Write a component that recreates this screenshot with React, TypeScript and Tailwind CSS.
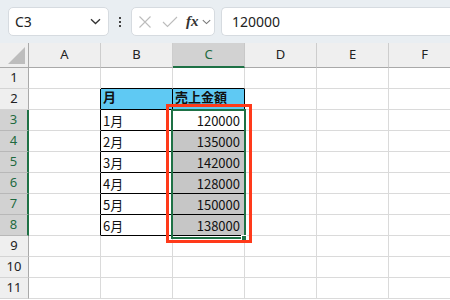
import React from "react";

const COLS = ["A", "B", "C", "D", "E", "F"];
const ROWS = [1, 2, 3, 4, 5, 6, 7, 8, 9, 10, 11];

const DATA: Record<number, [string, string]> = {
  2: ["月", "売上金額"],
  3: ["1月", "120000"],
  4: ["2月", "135000"],
  5: ["3月", "142000"],
  6: ["4月", "128000"],
  7: ["5月", "150000"],
  8: ["6月", "138000"],
};

const cellFont = { fontFamily: '"Noto Sans CJK JP", "Noto Sans", sans-serif' };
const uiFont = { fontFamily: '"Noto Sans", "Open Sans", sans-serif' };

function Chevron({ className }: { className?: string }) {
  return (
    <svg width="11" height="7" viewBox="0 0 11 7" className={className}>
      <path d="M1 1.2 L5.5 5.5 L10 1.2" fill="none" stroke="currentColor" strokeWidth="1.3" />
    </svg>
  );
}

function Toolbar() {
  return (
    <div className="flex h-[43px] items-start bg-[#e9eef2] pt-[7px]" style={uiFont}>
      <div className="ml-[8px] flex h-[29px] w-[101px] items-center justify-between rounded-[5px] border border-[#d6dbe0] bg-white pl-[6px] pr-[7px] text-[14px] text-[#222]">
        <span>C3</span>
        <Chevron className="text-[#333]" />
      </div>
      <div className="flex h-[29px] w-[22px] items-center justify-center">
        <div className="flex flex-col gap-[2px]">
          <span className="h-[2px] w-[2px] bg-[#444]" />
          <span className="h-[2px] w-[2px] bg-[#444]" />
          <span className="h-[2px] w-[2px] bg-[#444]" />
        </div>
      </div>
      <div className="flex h-[29px] w-[84px] items-center rounded-[5px] border border-[#d6dbe0] bg-white pl-[6px]">
        <svg width="14" height="14" viewBox="0 0 14 14" className="text-[#bcbcbc]">
          <path d="M1.5 1.5 L12.5 12.5 M12.5 1.5 L1.5 12.5" stroke="currentColor" strokeWidth="1.1" />
        </svg>
        <svg width="16" height="14" viewBox="0 0 16 14" className="ml-[10px] text-[#bcbcbc]">
          <path d="M1 7 L5.5 11.5 L15 2" fill="none" stroke="currentColor" strokeWidth="1.1" />
        </svg>
        <span
          className="ml-[8px] text-[15px] italic leading-none text-[#333]"
          style={{ fontFamily: '"Liberation Serif", serif', fontWeight: 700 }}
        >
          fx
        </span>
        <Chevron className="ml-[3px] h-[6px] w-[9px] text-[#777]" />
      </div>
      <div className="ml-[6px] flex h-[29px] flex-1 items-center rounded-l-[5px] border border-r-0 border-[#d6dbe0] bg-white pl-[10px] text-[14px] text-[#222]">
        120000
      </div>
    </div>
  );
}

function HeaderRow() {
  return (
    <div className="flex h-[25px]" style={uiFont}>
      <div className="relative w-[29px] shrink-0 border-r border-b border-[#a9a9a9] bg-[#efefef]">
        <svg width="17" height="17" viewBox="0 0 17 17" className="absolute bottom-[3px] right-[3px]">
          <path d="M17 0 L17 17 L0 17 Z" fill="#bdbdbd" />
        </svg>
      </div>
      {COLS.map((c) =>
        c === "C" ? (
          <div
            key={c}
            className="flex w-[72px] shrink-0 items-center justify-center border-r border-b-2 border-r-[#c8c8c8] border-b-[#1e7145] bg-[#d2d2d2] text-[13px] text-[#1e6a40]"
          >
            {c}
          </div>
        ) : (
          <div
            key={c}
            className="flex w-[72px] shrink-0 items-center justify-center border-r border-b border-r-[#cdcdcd] border-b-[#a9a9a9] bg-[#efefef] text-[13px] text-[#222]"
          >
            {c}
          </div>
        ),
      )}
    </div>
  );
}

function Row({ n }: { n: number }) {
  const selected = n >= 3 && n <= 8;
  const inTable = n >= 2 && n <= 8;
  const data = DATA[n];
  return (
    <div className="flex h-[21px]">
      <div
        className={
          selected
            ? "flex w-[29px] shrink-0 items-center justify-center border-r-2 border-b border-r-[#1e7145] border-b-[#b8b8b8] bg-[#d2d2d2] text-[13px] text-[#1e6a40]"
            : "flex w-[29px] shrink-0 items-center justify-center border-r border-b border-r-[#a9a9a9] border-b-[#d4d4d4] bg-[#efefef] text-[13px] text-[#222]"
        }
        style={uiFont}
      >
        {n}
      </div>
      {COLS.map((c) => {
        let cls = "flex w-[72px] shrink-0 items-end text-[13px] leading-[17px] text-[#111] border-r border-b";
        let content: React.ReactNode = null;
        if (c === "A") {
          cls += inTable ? " border-r-black border-b-[#dadada]" : " border-[#dadada]";
        } else if (c === "B") {
          if (inTable) {
            cls += " border-black pl-[2px]";
            content = data[0];
            cls += n === 2 ? " bg-[#5fc9f3] font-bold pb-[4px]" : " pb-[1px]";
          } else if (n === 1) {
            cls += " border-r-[#dadada] border-b-black";
          } else {
            cls += " border-[#dadada]";
          }
        } else if (c === "C") {
          if (inTable) {
            cls += " border-black";
            if (n === 2) {
              cls += " bg-[#5fc9f3] font-bold pl-[2px] pb-[4px]";
              content = data[1];
            } else {
              cls += " justify-end pr-[4px] pb-[1px]";
              if (n !== 3) cls += " bg-[#c6c6c6]";
              content = data[1];
            }
          } else if (n === 1) {
            cls += " border-r-[#dadada] border-b-black";
          } else {
            cls += " border-[#dadada]";
          }
        } else {
          cls += " border-[#dadada]";
        }
        return (
          <div key={c} className={cls} style={cellFont}>
            {content}
          </div>
        );
      })}
    </div>
  );
}

export default function App() {
  return (
    <div className="relative h-[300px] w-[450px] overflow-hidden bg-white">
      <Toolbar />
      <HeaderRow />
      {ROWS.map((n) => (
        <Row key={n} n={n} />
      ))}
      {/* selection */}
      <div className="absolute left-[171px] top-[109px] h-[130px] w-[75px] border-2 border-[#1e7145]" />
      <div className="absolute left-[241px] top-[235px] h-[6px] w-[6px] border border-white bg-[#1e7145]" />
      {/* red highlight */}
      <div className="absolute left-[166px] top-[104px] h-[139px] w-[86px] border-[3px] border-[#ff3a1a]" />
    </div>
  );
}
